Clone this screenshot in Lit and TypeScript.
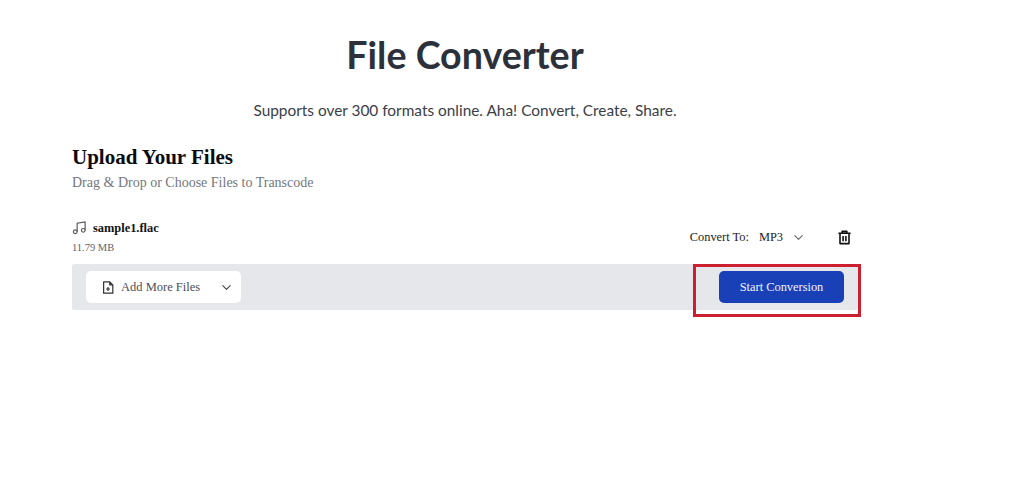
import { LitElement, html, css } from "lit";
import { customElement } from "lit/decorators.js";

@customElement("app-root")
export class AppRoot extends LitElement {
  static styles = css`
    :host { display: block; min-height: 486px; background: #fff; font-family: "Liberation Serif", serif; color: #111; }
    .page { width: 786px; margin-left: 72px; display: flex; flex-direction: column; }
    h1 { margin: 32px 0 0; height: 46px; text-align: center; font: 700 37.6px/46px Lato, sans-serif; color: #2b303b; }
    .sub { margin: 22px 0 0; text-align: center; font: 400 15.4px/20px Lato, sans-serif; color: #3b4048; }
    h2 { margin: 25px 0 0; font: 700 21px/24px "Liberation Serif", serif; color: #0c0c10; }
    .hint { margin: 5px 0 0; font-size: 14px; line-height: 18px; color: #73777f; }
    .file { display: flex; justify-content: space-between; align-items: center; margin-top: 27px; height: 46px; padding-bottom: 10px; box-sizing: border-box; }
    .name { display: flex; align-items: center; gap: 6px; font-weight: 700; font-size: 12.4px; line-height: 16px; color: #111; position: relative; top: 0; }
    .size { font-size: 10.5px; line-height: 14px; color: #5f636b; margin-top: 5px; }
    .right { display: flex; align-items: center; font-size: 12.4px; color: #1c1c1f; margin-right: 6px; }
    .right .mp3 { margin-left: 10px; }
    .right .chev { margin-left: 10px; }
    .right .trash { margin-left: 33px; }
    svg { display: block; flex: none; }
    .bar { height: 46px; background: #e5e7eb; border-radius: 2px; display: flex; align-items: center; justify-content: space-between; margin-top: -1px; padding: 0 14px; box-sizing: border-box; }
    .add { width: 155px; height: 32px; background: #fff; border-radius: 5px; display: flex; align-items: center; padding: 0 9px 0 15px; box-sizing: border-box; font-size: 12.5px; color: #4b4f57; }
    .add .label { margin-left: 6px; flex: 1; }
    .wrap { position: relative; }
    .start { display: block; width: 125px; height: 32px; border: 0; border-radius: 5px; background: #1a40b8; color: #f0f3ff; font: 12.4px "Liberation Serif", serif; padding: 0; }
    .mark { position: absolute; left: -26px; top: -7px; width: 168px; height: 53px; box-sizing: border-box; border: 3px solid #cc1f30; pointer-events: none; }
  `;

  private chev(color: string) {
    return html`<svg class="chev" width="11" height="11" viewBox="0 0 12 12" fill="none" stroke=${color} stroke-width="1.2" stroke-linecap="round" stroke-linejoin="round"><path d="M2 4l4 4 4-4"/></svg>`;
  }

  render() {
    return html`
      <div class="page">
        <h1>File Converter</h1>
        <p class="sub">Supports over 300 formats online. Aha! Convert, Create, Share.</p>
        <h2>Upload Your Files</h2>
        <p class="hint">Drag &amp; Drop or Choose Files to Transcode</p>
        <div class="file">
          <div>
            <div class="name">
              <svg width="15" height="15" viewBox="0 0 16 16" fill="none" stroke="#555" stroke-width="1.2"><circle cx="3.5" cy="12.5" r="2"/><circle cx="12" cy="11" r="2"/><path d="M5.5 12.5V3.500L14 2v9"/></svg>
              <span>sample1.flac</span>
            </div>
            <div class="size">11.79 MB</div>
          </div>
          <div class="right">
            <span>Convert To:</span>
            <span class="mp3">MP3</span>
            ${this.chev("#666")}
            <svg class="trash" width="15" height="15" viewBox="0 0 16 16" fill="none" stroke="#111" stroke-width="1.7" stroke-linejoin="round"><path d="M1.500 3.500h13M5.500 3.500V1.500h5v2M3.200 3.500v11h9.600v-11M6.500 6.500v5.500M9.500 6.500v5.500"/></svg>
          </div>
        </div>
        <div class="bar">
          <div class="add">
            <svg width="14" height="15" viewBox="0 0 16 16" fill="none" stroke="#333" stroke-width="1.4" stroke-linejoin="round"><path d="M3 1.500h7l3.500 3.500v9.500H3zM10 1.500V5h3.500M8 7.500v4.500M5.800 9.700h4.400"/></svg>
            <span class="label">Add More Files</span>
            ${this.chev("#444")}
          </div>
          <div class="wrap">
            <button class="start">Start Conversion</button>
            <div class="mark"></div>
          </div>
        </div>
      </div>
    `;
  }
}
